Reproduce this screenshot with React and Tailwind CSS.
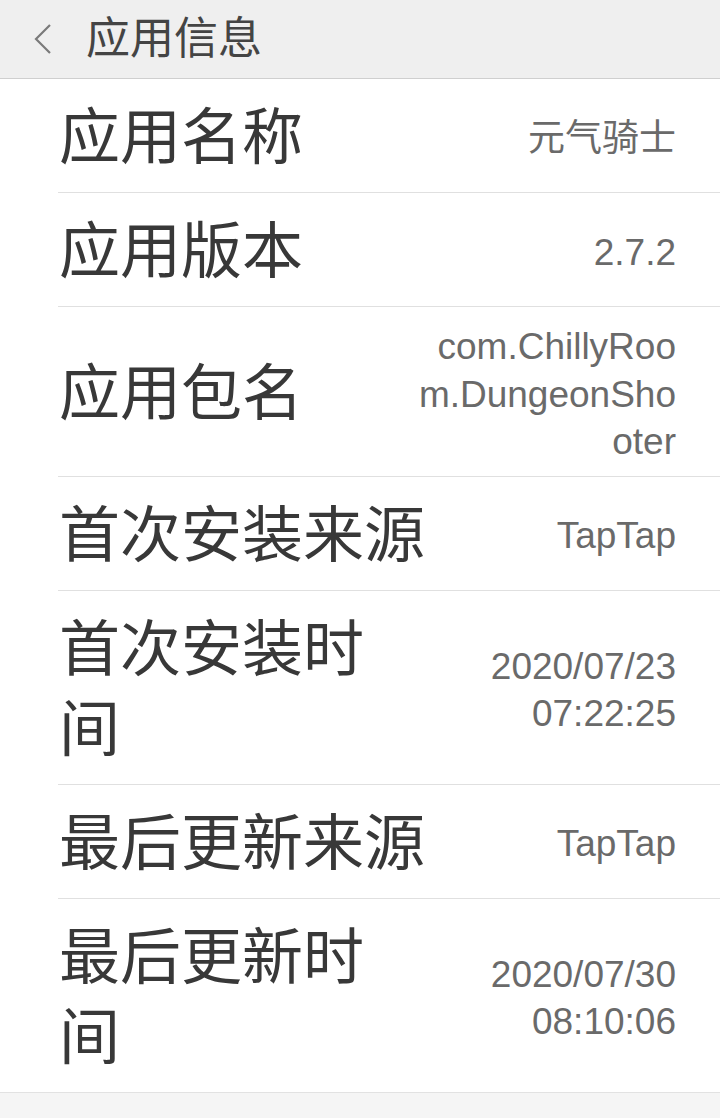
import React from 'react';

const rows = [
  { label: '应用名称', value: '元气骑士' },
  { label: '应用版本', value: '2.7.2' },
  { label: '应用包名', value: 'com.ChillyRoom.DungeonShooter' },
  { label: '首次安装来源', value: 'TapTap' },
  { label: '首次安装时间', value: '2020/07/23 07:22:25' },
  { label: '最后更新来源', value: 'TapTap' },
  { label: '最后更新时间', value: '2020/07/30 08:10:06' },
];

const font = { fontFamily: '"Liberation Sans", "Noto Sans CJK SC", sans-serif' };

const App = () => {
  return (
    <div className="min-h-screen bg-[#f5f5f5]" style={font}>
      {/* 顶部标题栏 */}
      <div className="flex h-[79px] items-center border-b border-[#cfcfcf] bg-[#efefef]">
        <svg width="20" height="32" viewBox="0 0 20 32" className="ml-[33px]">
          <polyline points="17,2 3,16 17,30" fill="none" stroke="#7a7a7a" strokeWidth="2.2" />
        </svg>
        <h1 className="ml-[33px] text-[44px] leading-none text-[#444444]">应用信息</h1>
      </div>

      {/* 信息列表 */}
      <div className="bg-white">
        {rows.map((row, index) => (
          <div
            key={row.label}
            className={`ml-[58px] flex items-center pt-[16px] pb-[10px] pr-[44px] ${
              index < rows.length - 1 ? 'border-b border-[#e0e0e0]' : ''
            }`}
          >
            <div className="min-w-0 flex-1 pt-[3px] pb-[4px] pl-[1px] text-[61px] leading-[80px] text-[#383838]">
              {row.label}
            </div>
            <div className="max-w-[262px] shrink-0 text-right text-[37px] leading-[47.5px] text-[#6a6a6a] [overflow-wrap:anywhere]">
              {row.value}
            </div>
          </div>
        ))}
      </div>
      <div className="h-[25px] border-t border-[#e2e2e2] bg-[#f5f5f5]" />
    </div>
  );
};

export default App;
